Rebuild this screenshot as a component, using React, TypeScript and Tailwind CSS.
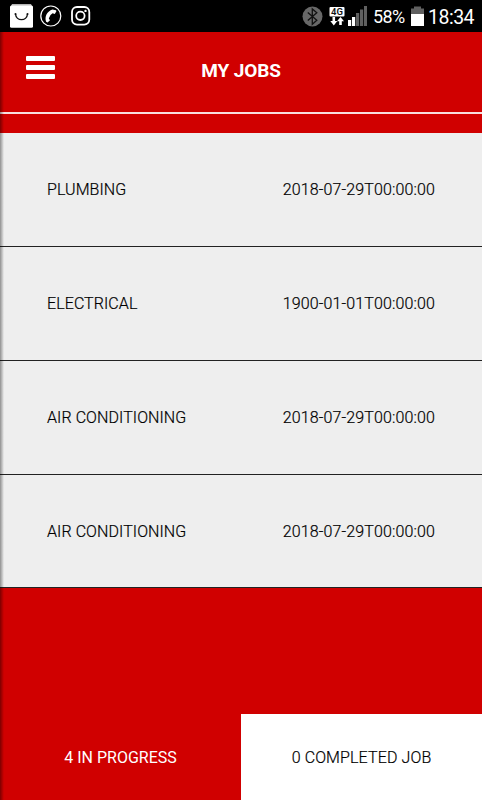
const jobs = [
  { id: 1, type: "PLUMBING", date: "2018-07-29T00:00:00" },
  { id: 2, type: "ELECTRICAL", date: "1900-01-01T00:00:00" },
  { id: 3, type: "AIR CONDITIONING", date: "2018-07-29T00:00:00" },
  { id: 4, type: "AIR CONDITIONING", date: "2018-07-29T00:00:00" },
];

function StatusBar() {
  return (
    <div className="flex h-8 shrink-0 items-center bg-black text-white">
      {/* Notifications */}
      <svg className="ml-[10px] h-8 w-[23px]" viewBox="0 0 23 32" fill="none">
        <path d="M2 4h19l2 4H0z" fill="#b5b5b5" />
        <rect y="5.5" width="23" height="22.3" rx="1.5" fill="#fff" />
        <path d="M5.5 14c.6 7.5 11.4 7.5 12 0" stroke="#111" strokeWidth="1.4" />
        <circle cx="5.5" cy="14" r="1" fill="#111" />
        <circle cx="17.5" cy="14" r="1" fill="#111" />
      </svg>
      <svg className="ml-[7px] h-[22px] w-[22px]" viewBox="0 0 22 22" fill="none">
        <circle cx="10.8" cy="11" r="10" stroke="#fff" strokeWidth="1.2" />
        <path
          d="M12.4 4.6 16 5.2 16.4 6.3 14.8 8.9 12.6 8.3Q9.4 10 8.8 13.5L10 15.3 7.6 17.5 6.1 16.8C4.3 11.5 7.2 6.3 12.4 4.6Z"
          fill="#fff"
        />
      </svg>
      <svg className="ml-[8px] h-[22px] w-[22px]" viewBox="0 0 22 22" fill="none" stroke="#fff">
        <rect x="2" y="2" width="17.3" height="17.6" rx="5" strokeWidth="1.8" />
        <circle cx="10.4" cy="10.8" r="4.2" strokeWidth="1.8" />
        <circle cx="15.5" cy="5.9" r="1.2" fill="#fff" stroke="none" />
      </svg>

      {/* Connectivity */}
      <svg className="ml-auto h-[21px] w-[21px]" viewBox="0 0 21 21" fill="none">
        <circle cx="10.5" cy="10.5" r="10" fill="#686868" />
        <path d="m5.8 6.5 9 7.7-4.5 4V3l4.5 3.7-9 7.7" stroke="#111" strokeWidth="1.3" />
      </svg>
      <svg className="ml-[6px] h-8 w-4" viewBox="0 0 16 32">
        <rect x="0.5" y="7" width="15" height="9.5" rx="1" fill="#fff" />
        <text x="8" y="15.2" textAnchor="middle" fontFamily="Roboto, sans-serif" fontSize="9.5" fontWeight="600" fill="#111">
          4G
        </text>
        <path d="M3.5 17h2.6v4h2.200l-3.500 4.500L1.300 21h2.200zM10.200 25v-3.700H8L11.500 17l3.500 4.300h-2.200V25z" fill="#fff" />
      </svg>
      <svg className="ml-[3px] h-8 w-[19px]" viewBox="0 0 19 32">
        <rect x="0" y="20" width="3.2" height="6" fill="#fff" />
        <rect x="4" y="17" width="3.2" height="9" fill="#fff" />
        <rect x="8" y="13" width="3.2" height="13" fill="#606060" />
        <rect x="12" y="9.5" width="3.2" height="16.5" fill="#606060" />
        <rect x="16" y="6" width="3" height="20" fill="#606060" />
      </svg>
      <span className="ml-[6px] mt-0.5 w-8 whitespace-nowrap text-[18px] leading-8 tracking-[-0.6px]">58%</span>
      <svg className="ml-[6px] h-8 w-[13px]" viewBox="0 0 13 32">
        <path d="M3 6.500h7v2h3v6H0v-6h3z" fill="#606060" />
        <path d="M0 14h13v12H0z" fill="#fff" />
      </svg>
      <span className="ml-1 mr-2 mt-[3px] w-[46px] whitespace-nowrap text-[19.5px] leading-8 tracking-[-0.5px]">18:34</span>
    </div>
  );
}

export default function App() {
  return (
    <div
      className="relative flex h-[800px] w-[482px] flex-col overflow-hidden bg-[#d00000]"
      style={{ fontFamily: "Roboto, sans-serif" }}
    >
      <StatusBar />

      {/* Header */}
      <header className="grid h-[82px] shrink-0 grid-cols-[1fr_auto_1fr] border-b-2 border-[#f8dede] text-white">
        <button aria-label="Menu" className="ml-[26px] mt-[24px] flex h-[23px] w-[29px] flex-col justify-between">
          <span className="h-[5px] w-full rounded-[1px] bg-white" />
          <span className="h-[5px] w-full rounded-[1px] bg-white" />
          <span className="h-[5px] w-full rounded-[1px] bg-white" />
        </button>
        <h1 className="mt-[25px] text-[19px] leading-7 font-bold tracking-[-0.1px]">MY JOBS</h1>
      </header>

      {/* Job list */}
      <ul className="mt-[19.4px] shrink-0 bg-[#eee]">
        {jobs.map((job) => (
          <li
            key={job.id}
            className="flex h-[113.75px] items-center justify-between border-b border-[#222] px-[47px] pt-[1.2px] text-base font-light text-black [-webkit-text-stroke:0.2px_black]"
          >
            <span className="tracking-[0.08px]">{job.type}</span>
            <span className="tracking-[0.14px]">{job.date}</span>
          </li>
        ))}
      </ul>

      {/* Tabs */}
      <nav className="mt-auto grid h-[86px] shrink-0 grid-cols-2 text-base">
        <button className="pt-0.5 text-white">4 IN PROGRESS</button>
        <button className="bg-white pt-0.5 font-light tracking-[0.12px] text-black [-webkit-text-stroke:0.2px_black]">
          0 COMPLETED JOB
        </button>
      </nav>

      {/* Drawer edge shadow */}
      <div className="pointer-events-none absolute top-8 bottom-0 left-0 w-1 bg-linear-to-r from-black/40 to-transparent" />
    </div>
  );
}
